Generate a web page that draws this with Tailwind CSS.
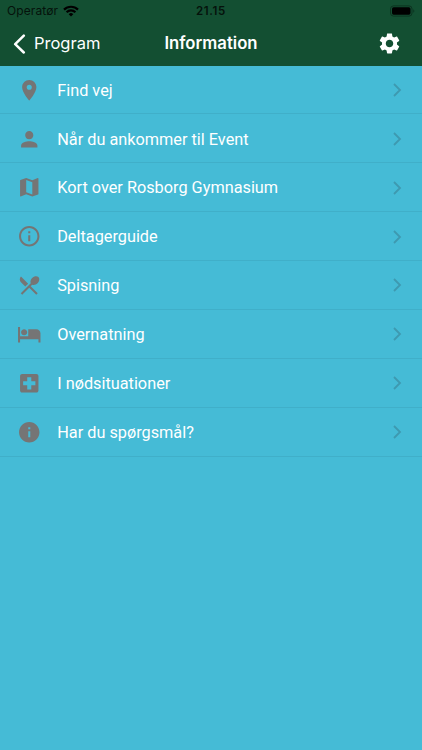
<!DOCTYPE html>
<html lang="da">
<head>
<meta charset="utf-8">
<title>Information</title>
<script src="https://cdn.jsdelivr.net/npm/@tailwindcss/browser@4"></script>
</head>
<body class="h-[750px] w-[422px] overflow-hidden bg-[#45bbd6] font-[Roboto,sans-serif]">
<header class="h-[65.5px] bg-[#134f32]">
  <div class="grid h-[22px] grid-cols-[1fr_auto_1fr] items-center pl-[7px] pr-[7px] font-[Inter,sans-serif] text-[12px] leading-[22px] text-[#05120b]">
    <div class="flex items-center gap-[5px]">
      <span class="tracking-[0.1px]">Operatør</span>
      <svg class="h-[12px] w-[16px]" viewBox="0 0 16 12" fill="none" stroke="#000" stroke-width="2.2"><path d="M1 4.6a10 10 0 0 1 14 0M3.6 7.3a6.2 6.2 0 0 1 8.800 0"/><path d="M8 11.500 5.700 9.200a3.300 3.300 0 0 1 4.600 0z" fill="#000" stroke="none"/></svg>
    </div>
    <span class="text-center text-[11.500px] font-semibold tracking-[0.6px]">21.15</span>
    <svg class="h-[12px] w-[26px] justify-self-end" viewBox="0 0 26 12"><rect x="1.500" y=".9" width="21.500" height="10.200" rx="3" fill="none" stroke="#0c3320"/><rect x="3" y="2.300" width="18.500" height="7.400" rx="1.600"/><path d="M24.300 4.200c1.400.6 1.400 3 0 3.600z" fill="#0c3320"/></svg>
  </div>
  <div class="grid h-[43px] grid-cols-[1fr_auto_1fr] items-center px-[13px] text-white">
    <div class="flex items-center gap-[8px] font-[Inter,sans-serif] text-[16.500px]">
      <svg class="h-[20px] w-[13px]" viewBox="0 0 13 20" fill="none" stroke="#fff" stroke-width="2.500" stroke-linecap="round" stroke-linejoin="round"><path d="M10.800 1.700 2.200 10.200l8.600 8.300"/></svg>
      <span>Program</span>
    </div>
    <h1 class="text-center font-[Inter,sans-serif] text-[16.700px] font-semibold">Information</h1>
    <svg class="mr-[7.500px] h-[25px] w-[25px] justify-self-end" viewBox="0 0 24 24" fill="#fff"><path d="M19.140 12.940c.04-.3.060-.61.060-.94 0-.32-.02-.64-.07-.94l2.030-1.580c.18-.14.230-.41.120-.61l-1.920-3.320c-.12-.22-.37-.29-.59-.22l-2.390.96c-.5-.38-1.030-.7-1.620-.94L14.400 2.810c-.04-.24-.24-.41-.48-.41h-3.840c-.24 0-.43.17-.47.41L9.250 5.350c-.59.24-1.130.57-1.620.94l-2.390-.96c-.22-.08-.47 0-.59.22L2.740 8.870c-.12.21-.08.47.12.61l2.030 1.580c-.05.3-.09.63-.09.94s.02.640.070.940l-2.030 1.580c-.18.140-.23.410-.12.610l1.920 3.320c.12.220.37.290.59.220l2.390-.96c.5.380 1.030.7 1.620.940l.36 2.540c.05.240.240.410.480.410h3.840c.24 0 .44-.17.470-.41l.36-2.540c.59-.24 1.130-.56 1.620-.94l2.390.96c.22.080.47 0 .59-.22l1.920-3.320c.12-.22.070-.47-.12-.61zM12 15.600c-1.980 0-3.600-1.620-3.600-3.600s1.620-3.600 3.600-3.600 3.600 1.620 3.600 3.600-1.620 3.600-3.600 3.600z"/></svg>
  </div>
</header>
<main id="list"></main>
<template id="row">
  <div class="flex h-[48.880px] items-center border-b border-[#40afc9] pl-[16.500px] pr-[20px] pt-[1px]">
    <svg class="icon h-[24.500px] w-[24.500px] shrink-0" viewBox="0 0 24 24" fill="#757575"><path/></svg>
    <span class="ml-[16.200px] flex-1 whitespace-nowrap pt-[2px] text-[16.300px] text-white"></span>
    <svg class="h-[14px] w-[10px]" viewBox="0 0 10 14" fill="none" stroke="#3e99b0" stroke-width="1.800"><path d="m2 1 6 6-6 6"/></svg>
  </div>
</template>
<script>
const rows = [
  ['Find vej', 'M12 2C8.130 2 5 5.130 5 9c0 5.250 7 13 7 13s7-7.750 7-13c0-3.870-3.130-7-7-7zm0 9.500a2.500 2.500 0 0 1 0-5 2.500 2.500 0 0 1 0 5z'],
  ['Når du ankommer til Event', 'M12 12c2.210 0 4-1.790 4-4s-1.790-4-4-4-4 1.790-4 4 1.790 4 4 4zm0 2c-2.670 0-8 1.340-8 4v2h16v-2c0-2.660-5.330-4-8-4z'],
  ['Kort over Rosborg Gymnasium', 'M20.500 3l-.16.030L15 5.100 9 3 3.360 4.900c-.21.070-.36.250-.36.480V20.500c0 .28.220.5.500.5l.16-.03L9 18.900l6 2.100 5.640-1.900c.21-.07.360-.25.360-.48V3.500c0-.28-.22-.5-.5-.5zM15 19l-6-2.110V5l6 2.110V19z'],
  ['Deltagerguide', 'M11 7h2v2h-2zm0 4h2v6h-2zm1-9C6.480 2 2 6.480 2 12s4.480 10 10 10 10-4.480 10-10S17.520 2 12 2zm0 18c-4.410 0-8-3.590-8-8s3.590-8 8-8 8 3.590 8 8-3.590 8-8 8z'],
  ['Spisning', 'M8.100 13.340l2.830-2.830L3.910 3.500c-1.560 1.560-1.560 4.090 0 5.660l4.190 4.180zm6.780-1.810c1.530.71 3.680.21 5.270-1.380 1.910-1.910 2.280-4.650.81-6.120-1.460-1.460-4.200-1.100-6.120.81-1.590 1.590-2.090 3.740-1.380 5.270L3.700 19.870l1.410 1.410L12 14.410l6.880 6.880 1.410-1.410L13.410 13l1.470-1.470z'],
  ['Overnatning', 'M7 13c1.660 0 3-1.340 3-3S8.660 7 7 7s-3 1.340-3 3 1.340 3 3 3zm12-6h-8v7H3V5H1v15h2v-3h18v3h2v-9c0-2.210-1.790-4-4-4z'],
  ['I nødsituationer', 'M19 3H5c-1.100 0-1.990.9-1.990 2L3 19c0 1.100.9 2 2 2h14c1.100 0 2-.9 2-2V5c0-1.100-.9-2-2-2zm-1 11h-4v4h-4v-4H6v-4h4V6h4v4h4v4z'],
  ['Har du spørgsmål?', 'M12 2C6.480 2 2 6.480 2 12s4.480 10 10 10 10-4.480 10-10S17.520 2 12 2zm1 15h-2v-6h2v6zm0-8h-2V7h2v2z']
];
const template = document.getElementById('row');
for (const [label, path] of rows) {
  const row = template.content.cloneNode(true);
  row.querySelector('.icon path').setAttribute('d', path);
  row.querySelector('span').textContent = label;
  document.getElementById('list').append(row);
}
</script>
</body>
</html>
